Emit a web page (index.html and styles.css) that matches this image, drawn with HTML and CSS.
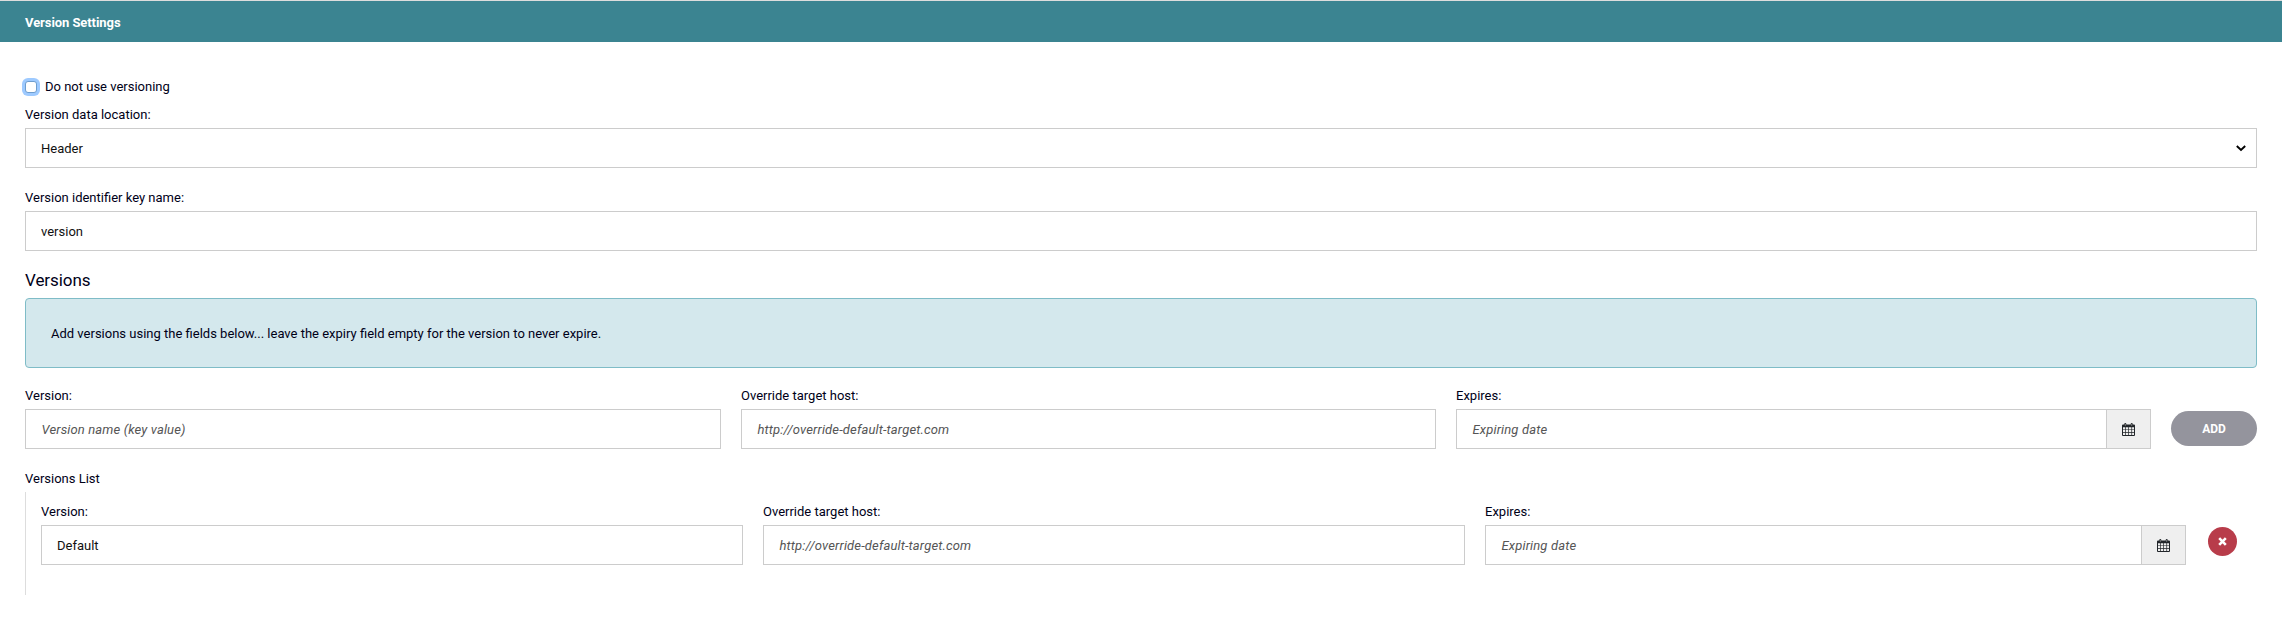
FILE: index.html
```html
<!DOCTYPE html>
<html lang="en">
<head>
<meta charset="utf-8">
<title>Version Settings</title>
<link rel="stylesheet" href="styles.css">
</head>
<body>
<svg class="defs" width="0" height="0" aria-hidden="true">
  <symbol id="calendar" viewBox="0 0 13 13">
    <path fill="#212529" fill-rule="evenodd" d="M1 1.5h1.300V1a1 1 0 0 1 2 0v.5h4.400V1a1 1 0 0 1 2 0v.5H12a1 1 0 0 1 1 1V12a1 1 0 0 1-1 1H1a1 1 0 0 1-1-1V2.500a1 1 0 0 1 1-1zM1 4.200v2.200h2V4.200zM3.700 4.200v2.200h2.500V4.200zM6.900 4.200v2.200h2.500V4.200zM10.100 4.200v2.200H12V4.200zM1 7.100v2h2v-2zM3.700 7.100v2h2.500v-2zM6.900 7.100v2h2.500v-2zM10.100 7.100v2H12v-2zM1 9.800V12h2V9.800zM3.700 9.800V12h2.500V9.800zM6.900 9.800V12h2.500V9.800zM10.100 9.800V12H12V9.800z"/>
    <path stroke="#bbb" stroke-width=".6" d="M3.300.9v2M9.700.9v2"/>
  </symbol>
</svg>
<header class="panel-header">Version Settings</header>
<main class="panel-body">
  <label class="check"><input type="checkbox" class="check-box"><span>Do not use versioning</span></label>
  <div class="field">
    <label class="label">Version data location:</label>
    <div class="control select">Header
      <svg class="chevron" width="10" height="7" viewBox="0 0 10 7"><path d="M.8 1L5 5l4.200-4" fill="none" stroke="#000" stroke-width="1.900"/></svg>
    </div>
  </div>
  <div class="field">
    <label class="label">Version identifier key name:</label>
    <input class="control" value="version">
  </div>
  <h2 class="title">Versions</h2>
  <div class="alert">Add versions using the fields below... leave the expiry field empty for the version to never expire.</div>
  <div class="row add-row">
    <div class="field"><label class="label">Version:</label><input class="control" placeholder="Version name (key value)"></div>
    <div class="field"><label class="label">Override target host:</label><input class="control" placeholder="http://override-default-target.com"></div>
    <div class="field"><label class="label">Expires:</label>
      <div class="group"><input class="control" placeholder="Expiring date"><button class="addon" aria-label="Pick date"><svg width="13" height="13"><use href="#calendar"/></svg></button></div>
    </div>
    <button class="add">ADD</button>
  </div>
  <div class="list-title">Versions List</div>
  <div class="list">
    <div class="row list-row">
      <div class="field"><label class="label">Version:</label><input class="control" value="Default"></div>
      <div class="field"><label class="label">Override target host:</label><input class="control" placeholder="http://override-default-target.com"></div>
      <div class="field"><label class="label">Expires:</label>
        <div class="group"><input class="control" placeholder="Expiring date"><button class="addon" aria-label="Pick date"><svg width="13" height="13"><use href="#calendar"/></svg></button></div>
      </div>
      <button class="remove" aria-label="Remove"><svg width="9" height="9" viewBox="0 0 9 9"><path d="M1.200 1.200l6.600 6.600M7.800 1.200L1.200 7.800" stroke="#fff" stroke-width="2.600"/></svg></button>
    </div>
  </div>
</main>
</body>
</html>
```
FILE: styles.css
```css
* { box-sizing: border-box; }
body {
  margin: 0;
  background: #fff;
  color: #000018;
  font: 13px/20px Roboto, sans-serif;
}
input, button { font: inherit; margin: 0; }
.defs { display: block; height: 0; }
.panel-header {
  height: 42px;
  padding: 0 25px;
  border-top: 1px solid #ddd;
  background: #3b8491;
  color: #fff;
  font-weight: 700;
  letter-spacing: -.07px;
  line-height: 43px;
}
.panel-body { padding: 34px 25px 0; }
.check { display: flex; align-items: center; height: 22px; }
.check-box {
  appearance: none;
  width: 12px;
  height: 12px;
  margin-right: 8px;
  border: 1px solid #6d9dce;
  border-radius: 3px;
  background: #fff;
  box-shadow: 0 0 0 3px #9ecaff;
}
.field { min-width: 0; }
.label { display: block; height: 23px; line-height: 20px; }
.check + .field { margin-top: 7px; }
.field + .field { margin-top: 20px; }
.control {
  display: block;
  width: 100%;
  height: 40px;
  padding: 0 15px;
  border: 1px solid #ccc;
  border-radius: 0;
  background: #fff;
  color: #111;
  line-height: 38px;
  outline: none;
}
.control::placeholder {
  color: #555;
  font-style: italic;
  letter-spacing: .14px;
  text-indent: .5px;
  opacity: 1;
}
.select {
  display: flex;
  align-items: center;
  justify-content: space-between;
  padding: 1px 10px 0 15px;
}
.chevron { margin-top: -1px; }
.title {
  margin: 17px 0 6px;
  font-size: 17px;
  font-weight: 400;
  letter-spacing: -.07px;
  line-height: 24px;
}
.alert {
  height: 70px;
  padding: 0 25px;
  border: 1px solid #7fbcc7;
  border-radius: 4px;
  background: #d4e8ed;
  line-height: 69px;
}
.row { display: grid; align-items: start; column-gap: 20px; }
.row .field + .field { margin-top: 0; }
.add-row { grid-template-columns: 696px 695px 1fr 86px; margin-top: 18px; }
.list-row { grid-template-columns: 702px 702px 1fr 31px; }
.group { display: flex; }
.addon {
  display: grid;
  place-items: center;
  flex: 0 0 44px;
  height: 40px;
  padding: 0;
  border: 1px solid #ccc;
  border-left: 0;
  background: #efefef;
}
.add {
  height: 35px;
  margin-top: 25px;
  padding: 0;
  border: 0;
  border-radius: 18px;
  background: #94949d;
  color: #fff;
  font-size: 12px;
  font-weight: 700;
}
.list-title { margin-top: 20px; height: 23px; }
.list {
  height: 103px;
  padding: 10px 20px 0 15px;
  border-left: 1px solid #ddd;
}
.remove {
  display: grid;
  place-items: center;
  width: 29px;
  height: 29px;
  margin: 25px 0 0 2px;
  padding: 0;
  border: 0;
  border-radius: 50%;
  background: #b83c4a;
}
```
